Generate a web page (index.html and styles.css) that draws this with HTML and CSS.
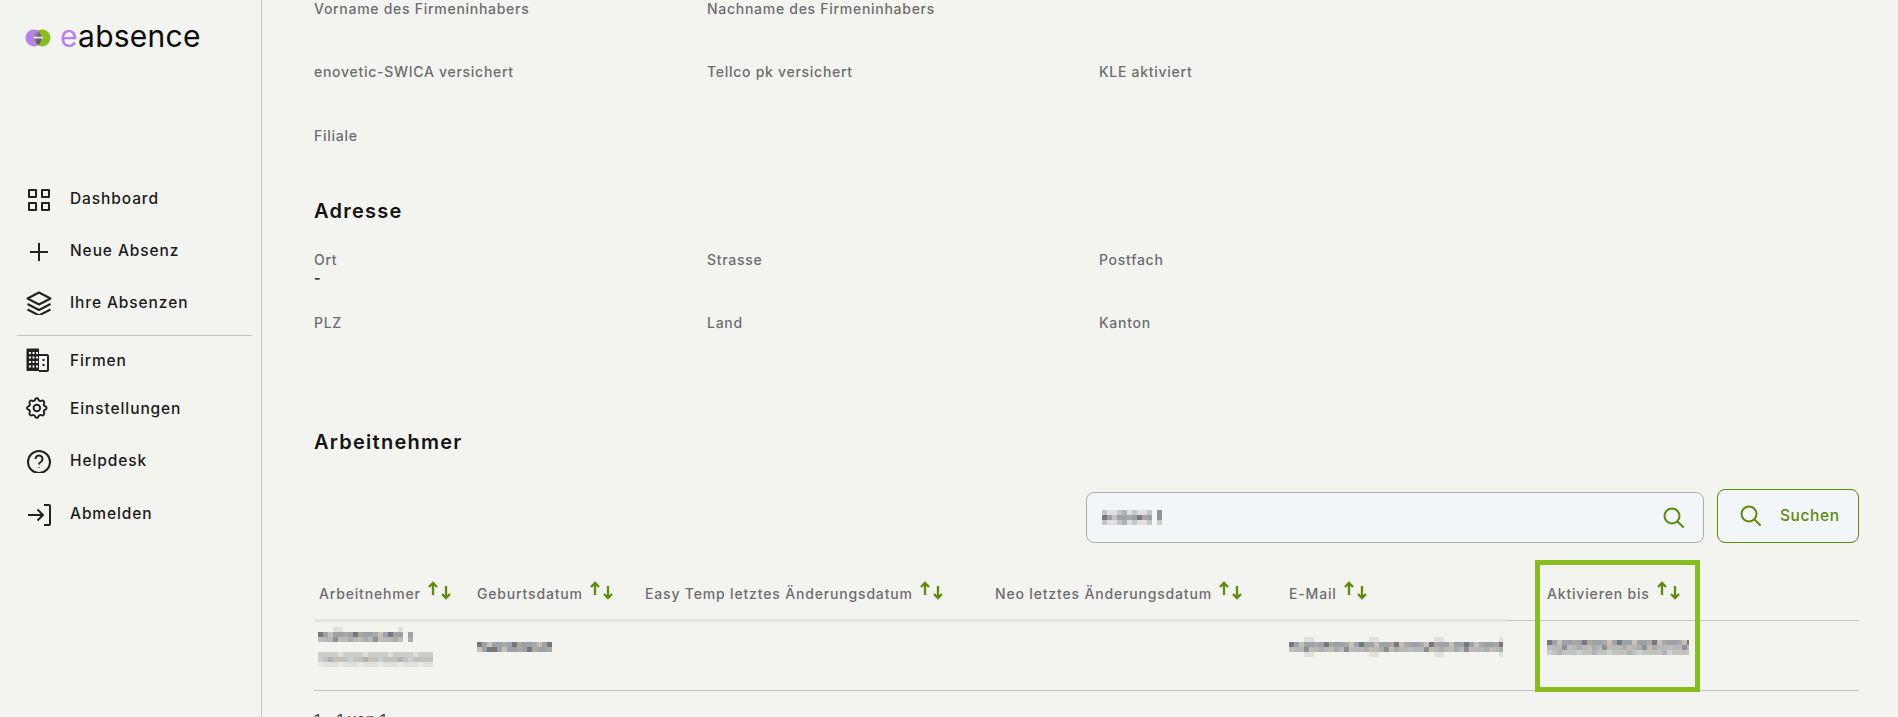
FILE: index.html
```html
<!DOCTYPE html>
<html lang="de">
<head>
<meta charset="utf-8">
<title>eAbsence</title>
<link rel="stylesheet" href="styles.css">
</head>
<body>
<div class="app">
  <aside class="sidebar">
    <div class="brand">
      <svg class="brand-mark" width="26" height="18" viewBox="0 0 26 18">
        <defs><linearGradient id="mix" x1="0" x2="1" y1="0" y2="1"><stop offset="0" stop-color="#b77ff0"/><stop offset="1" stop-color="#3d3d45"/></linearGradient></defs>
        <circle cx="9" cy="9" r="8.500" fill="#b77ff0"/>
        <circle cx="17" cy="9" r="8.500" fill="#86bd1f"/>
        <path d="M13 2.200a8.500 8.500 0 0 1 0 13.600a8.500 8.500 0 0 1 0-13.600z" fill="url(#mix)"/>
        <path d="M9 8.600h9" stroke="#f3f3ef" stroke-width="1.600"/>
      </svg>
      <span class="brand-name"><span class="brand-e">e</span>absence</span>
    </div>
    <nav class="nav">
      <ul class="nav-group">
        <li class="nav-item"><svg class="nav-icon" viewBox="0 -2 26 26"><rect x="3" y="3" width="7" height="7"/><rect x="16" y="3" width="7" height="7"/><rect x="3" y="16" width="7" height="7"/><rect x="16" y="16" width="7" height="7"/></svg>Dashboard</li>
        <li class="nav-item"><svg class="nav-icon" viewBox="0 -2 26 26"><path d="M13 4V22M4 13H22"/></svg>Neue Absenz</li>
        <li class="nav-item"><svg class="nav-icon" viewBox="0 -2 26 26"><path d="M13 1.500L24.500 7.500L13 13.500L1.500 7.500Z"/><path d="M1.500 13L13 19L24.500 13"/><path d="M1.500 18.500L13 24.500L24.500 18.500"/></svg>Ihre Absenzen</li>
      </ul>
      <ul class="nav-group nav-group-ruled">
        <li class="nav-item nav-item-short"><svg class="nav-icon" viewBox="0 0 26 26"><path class="solid" d="M0.500 2.500a1 1 0 0 1 1-1H13V24H1.500a1 1 0 0 1-1-1Z"/><path class="cut" d="M3 5h2v2h-2zM6.500 5h2v2h-2zM10 5h2v2h-2zM3 9.500h2v2h-2zM6.500 9.500h2v2h-2zM10 9.500h2v2h-2zM3 14h2v2h-2zM6.500 14h2v2h-2zM10 14h2v2h-2zM3 18.500h2v2h-2zM6.500 18.500h2v2h-2zM10 18.500h2v2h-2z"/><path d="M13 8h8a1 1 0 0 1 1 1v14a1 1 0 0 1-1 1h-8"/><path class="solid" d="M16.500 12h2v2h-2zM16.500 17h2v2h-2z"/></svg>Firmen</li>
        <li class="nav-item nav-item-short"><svg class="nav-icon" viewBox="2 0 24 24"><path class="thin" d="M10.325 4.317c.426 -1.756 2.924 -1.756 3.35 0a1.724 1.724 0 0 0 2.573 1.066c1.543 -.94 3.31 .826 2.37 2.37a1.724 1.724 0 0 0 1.065 2.572c1.756 .426 1.756 2.924 0 3.35a1.724 1.724 0 0 0 -1.066 2.573c.94 1.543 -.826 3.31 -2.37 2.37a1.724 1.724 0 0 0 -2.572 1.065c-.426 1.756 -2.924 1.756 -3.35 0a1.724 1.724 0 0 0 -2.573 -1.066c-1.543 .94 -3.31 -.826 -2.37 -2.37a1.724 1.724 0 0 0 -1.065 -2.572c-1.756 -.426 -1.756 -2.924 0 -3.35a1.724 1.724 0 0 0 1.066 -2.573c-.94 -1.543 .826 -3.31 2.37 -2.37c1 .608 2.296 .07 2.572 -1.065z"/><circle class="thin" cx="12" cy="12" r="3"/></svg>Einstellungen</li>
      </ul>
      <ul class="nav-group nav-group-last">
        <li class="nav-item"><svg class="nav-icon" viewBox="0 -2 26 26"><circle cx="13" cy="13" r="11"/><path d="M9.500 10a3.500 3.500 0 1 1 5.300 3c-1.100 .7-1.800 1.300-1.800 2.500"/><path d="M13 18.500v.5"/></svg>Helpdesk</li>
        <li class="nav-item"><svg class="nav-icon" viewBox="0 -2 26 26"><path d="M2 13H17M11.500 7.500L17 13L11.500 18.500"/><path d="M18 3h5a1 1 0 0 1 1 1v18a1 1 0 0 1-1 1h-5"/></svg>Abmelden</li>
      </ul>
    </nav>
  </aside>

  <main class="main">
    <section class="fields">
      <div class="field"><div class="field-label">Vorname des Firmeninhabers</div><div class="field-value"></div></div>
      <div class="field"><div class="field-label">Nachname des Firmeninhabers</div><div class="field-value"></div></div>
      <div class="field"></div>
      <div class="field"><div class="field-label">enovetic-SWICA versichert</div><div class="field-value"></div></div>
      <div class="field"><div class="field-label">Tellco pk versichert</div><div class="field-value"></div></div>
      <div class="field"><div class="field-label">KLE aktiviert</div><div class="field-value"></div></div>
      <div class="field field-last-row"><div class="field-label">Filiale</div><div class="field-value"></div></div>
    </section>

    <h2 class="section-title title-address">Adresse</h2>
    <section class="fields">
      <div class="field"><div class="field-label">Ort</div><div class="field-value">-</div></div>
      <div class="field"><div class="field-label">Strasse</div><div class="field-value"></div></div>
      <div class="field"><div class="field-label">Postfach</div><div class="field-value"></div></div>
      <div class="field"><div class="field-label">PLZ</div><div class="field-value"></div></div>
      <div class="field"><div class="field-label">Land</div><div class="field-value"></div></div>
      <div class="field"><div class="field-label">Kanton</div><div class="field-value"></div></div>
    </section>

    <h2 class="section-title title-employees">Arbeitnehmer</h2>
    <div class="toolbar">
      <div class="search-box">
        <div class="search-value">
          <div class="mosaic mosaic-search"><i class="r-light"></i><i class="r-dark"></i><i class="r-light"></i></div>
          <div class="mosaic mosaic-search-end"><i class="r-solid"></i><i class="r-solid"></i><i class="r-pale"></i></div>
        </div>
        <svg class="search-icon" width="22" height="22" viewBox="0 0 22 22"><circle cx="9" cy="9" r="7.500"/><path d="M14.500 14.500L20 20"/></svg>
      </div>
      <button class="search-button" type="button">
        <svg class="search-icon" width="22" height="22" viewBox="0 0 22 22"><circle cx="9" cy="9" r="7.500"/><path d="M14.500 14.500L20 20"/></svg>
        Suchen
      </button>
    </div>

    <div class="table-wrap">
      <table class="table">
        <thead>
          <tr>
            <th class="col-name">Arbeitnehmer<svg class="sort" viewBox="0 0 24 20"><path d="M5 14V2M1 6L5 2L9 6"/><path d="M18 5V17M14 13L18 17L22 13"/></svg></th>
            <th class="col-birth">Geburtsdatum<svg class="sort" viewBox="0 0 24 20"><path d="M5 14V2M1 6L5 2L9 6"/><path d="M18 5V17M14 13L18 17L22 13"/></svg></th>
            <th class="col-easy">Easy Temp letztes Änderungsdatum<svg class="sort" viewBox="0 0 24 20"><path d="M5 14V2M1 6L5 2L9 6"/><path d="M18 5V17M14 13L18 17L22 13"/></svg></th>
            <th class="col-neo">Neo letztes Änderungsdatum<svg class="sort" viewBox="0 0 24 20"><path d="M5 14V2M1 6L5 2L9 6"/><path d="M18 5V17M14 13L18 17L22 13"/></svg></th>
            <th class="col-mail">E-Mail<svg class="sort" viewBox="0 0 24 20"><path d="M5 14V2M1 6L5 2L9 6"/><path d="M18 5V17M14 13L18 17L22 13"/></svg></th>
            <th class="col-until">Aktivieren bis<svg class="sort" viewBox="0 0 24 20"><path d="M5 14V2M1 6L5 2L9 6"/><path d="M18 5V17M14 13L18 17L22 13"/></svg></th>
          </tr>
        </thead>
        <tbody>
          <tr>
            <td>
              <div class="mosaic mosaic-name"><i class="r-speck"></i><i class="r-dark"></i><i class="r-mid"></i><i class="r-none"></i><i class="r-none"></i><i class="r-pale"></i><i class="r-mid-soft"></i><i class="r-faint"></i></div>
            </td>
            <td><div class="mosaic mosaic-birth"><i class="r-dark"></i><i class="r-dark r-alt"></i></div></td>
            <td></td>
            <td></td>
            <td><div class="mosaic mosaic-mail"><i class="r-speck"></i><i class="r-dark"></i><i class="r-mid"></i><i class="r-speck r-alt"></i></div></td>
            <td class="col-until"><div class="mosaic mosaic-until"><i class="r-dark"></i><i class="r-mid"></i><i class="r-mid-soft"></i></div></td>
          </tr>
        </tbody>
      </table>
      <div class="highlight"></div>
    </div>
    <p class="pager">1 - 1 von 1</p>
  </main>
</div>
</body>
</html>
```

FILE: styles.css
```css
* { box-sizing: border-box; }

html, body {
  margin: 0;
  height: 717px;
  overflow: hidden;
  background: #f3f3ef;
}

body {
  font-family: Inter, "Liberation Sans", sans-serif;
  color: #141414;
}

.app {
  display: flex;
  height: 717px;
}

/* Sidebar */
.sidebar {
  flex: 0 0 262px;
  padding: 0 9px 0 17px;
  border-right: 1px solid #c4c4c4;
}

.brand {
  display: flex;
  align-items: center;
  gap: 9px;
  height: 172px;
  padding: 0 0 96px 8px;
}

.brand-name {
  margin-bottom: 5px;
  font-size: 30px;
  font-weight: 400;
  line-height: 36px;
  letter-spacing: .25px;
  color: #0b0b0b;
}

.brand-e { color: #b77ff0; }

.nav-group {
  list-style: none;
  margin: 0;
  padding: 0;
}

.nav-group-ruled {
  margin-top: 7px;
  border-top: 1px solid #c4c4c4;
}

.nav-group-last { margin-top: 2px; }
.nav-group-last .nav-item + .nav-item { margin-top: 1px; }

.nav-item {
  display: flex;
  align-items: center;
  gap: 18px;
  height: 52px;
  padding-left: 9px;
  font-size: 15.500px;
  font-weight: 500;
  letter-spacing: .9px;
  color: #1b1b1b;
}

.nav-item-short { height: 48px; }

.nav-icon {
  flex: none;
  width: 26px;
  height: 26px;
  fill: none;
  stroke: #222;
  stroke-width: 2;
  stroke-linejoin: round;
}

.nav-icon .solid { fill: #222; stroke: none; }
.nav-icon .cut { fill: #f3f3ef; stroke: none; }
.nav-icon .thin { stroke-width: 1.800; }

/* Main */
.main {
  flex: 1;
  min-width: 0;
  padding: 0 39px 0 52px;
}

.fields {
  display: grid;
  grid-template-columns: 393px 392px 1fr;
  row-gap: 27px;
}

.field { min-height: 36px; }
.field-last-row { margin-top: 1px; }

.field-label,
.field-value {
  height: 18px;
  font-size: 14px;
  line-height: 18px;
  letter-spacing: .72px;
}

.field-label {
  font-weight: 500;
  color: #6d6d70;
}

.field-value {
  font-weight: 700;
  color: #333;
}

.section-title {
  margin: 0;
  font-size: 20px;
  line-height: 24px;
  font-weight: 600;
  letter-spacing: 1.250px;
  color: #141414;
}

.title-address { margin: 36px 0 28px; }
.title-employees { margin: 80px 0 35px; }

.toolbar {
  display: flex;
  justify-content: flex-end;
  align-items: flex-end;
  gap: 13px;
  height: 54px;
}

.search-box {
  display: flex;
  align-items: center;
  justify-content: space-between;
  width: 618px;
  height: 51px;
  padding: 0 18px 0 15px;
  background: #f3f6f9;
  border: 1px solid #aeaeae;
  border-radius: 8px;
}

.search-value {
  display: flex;
  gap: 5px;
}

.search-icon {
  fill: none;
  stroke: #5b8c0a;
  stroke-width: 2;
  stroke-linecap: round;
}

.search-button {
  display: flex;
  align-items: center;
  gap: 18px;
  width: 142px;
  height: 54px;
  padding: 0 0 0 22px;
  background: #f3f6f9;
  border: 1px solid #5b8c0a;
  border-radius: 8px;
  font: 500 15.500px/1 Inter, "Liberation Sans", sans-serif;
  letter-spacing: .6px;
  color: #5b8c0a;
}

/* Table */
.table-wrap { position: relative; }

.table {
  width: 1545px;
  table-layout: fixed;
  border-collapse: separate;
  border-spacing: 0;
}

.table th {
  height: 79px;
  padding: 0 0 16px 5px;
  text-align: left;
  vertical-align: bottom;
  white-space: nowrap;
  font-size: 14px;
  line-height: 18px;
  font-weight: 500;
  letter-spacing: .83px;
  color: #6d6d70;
  border-bottom: 3px solid #e4e4e1;
}

.table th.col-until {
  padding-left: 40px;
  padding-bottom: 19px;
  border-bottom: 0;
  background: linear-gradient(#c4c4c4, #c4c4c4) 0 calc(100% - 1px) / 100% 1px no-repeat;
}

.col-name { width: 158px; }
.col-birth { width: 168px; }
.col-easy { width: 350px; }
.col-neo { width: 294px; }
.col-mail { width: 223px; }
.col-until { width: 352px; }

.sort {
  width: 24px;
  height: 20px;
  margin-left: 7px;
  vertical-align: -2px;
  fill: none;
  stroke: #5b8c0a;
  stroke-width: 2.300;
}

.table td {
  height: 69px;
  padding: 0 0 0 5px;
  vertical-align: top;
  border-bottom: 1px solid #c4c4c4;
}

.table td.col-until { padding-left: 40px; }

/* Pixelated (redacted) values */
.mosaic i {
  display: block;
  height: 5px;
}

.mosaic-search { width: 50px; }
.mosaic-search-end { width: 5px; }
.mosaic-name { width: 115px; margin: 5px 0 0 -1px; }
.mosaic-name i:nth-child(-n+3) {
  -webkit-mask-image: linear-gradient(90deg, #000 0 85px, transparent 85px 90px, #000 90px 95px, transparent 95px);
  mask-image: linear-gradient(90deg, #000 0 85px, transparent 85px 90px, #000 90px 95px, transparent 95px);
}
.mosaic-birth { width: 75px; margin-top: 20px; }
.mosaic-mail { width: 214px; margin-top: 15px; }
.mosaic-until { width: 142px; margin-top: 18px; }

.r-dark {
  background:
    repeating-linear-gradient(90deg, #77777d 0 5px, transparent 5px 35px),
    repeating-linear-gradient(90deg, transparent 0 10px, #c9bfb4 10px 15px, transparent 15px 25px),
    repeating-linear-gradient(90deg, #9ba3a8 0 10px, transparent 10px 15px),
    #a9a8a3;
}

.r-alt { background-position: 15px 0; }

.r-solid { background: #939393; }

.r-mid {
  background:
    repeating-linear-gradient(90deg, transparent 0 15px, #8e9095 15px 20px, transparent 20px 40px),
    repeating-linear-gradient(90deg, #c2bcb3 0 5px, transparent 5px 20px),
    repeating-linear-gradient(90deg, transparent 0 5px, #b4b9bd 5px 15px),
    #adaca8;
}

.r-mid-soft {
  background:
    repeating-linear-gradient(90deg, transparent 0 10px, #b0b2b3 10px 15px, transparent 15px 35px),
    repeating-linear-gradient(90deg, #c6d0d6 0 5px, transparent 5px 30px),
    #c3c2bd;
}

.r-pale {
  background:
    repeating-linear-gradient(90deg, transparent 0 20px, #dcdcda 20px 25px),
    #cdccc8;
}

.r-light {
  background:
    repeating-linear-gradient(90deg, #c2c6c9 0 5px, transparent 5px 15px),
    repeating-linear-gradient(90deg, transparent 0 20px, #adb2b6 20px 25px),
    #dfe0df;
}

.r-faint {
  background:
    repeating-linear-gradient(90deg, #e9e9e7 0 5px, transparent 5px 20px),
    #dfdfdc;
}

.r-speck {
  background:
    repeating-linear-gradient(90deg, transparent 0 15px, #e0e0dd 15px 25px, transparent 25px 65px);
}

.r-none { background: none; }

/* Annotation drawn over the table */
.highlight {
  position: absolute;
  left: 1221px;
  top: 17px;
  width: 165px;
  height: 132px;
  border: 5px solid #87bd1f;
}

.pager {
  margin: 20px 0 0;
  font-size: 15px;
  line-height: 18px;
  font-weight: 500;
  letter-spacing: .4px;
  color: #555;
}
```
